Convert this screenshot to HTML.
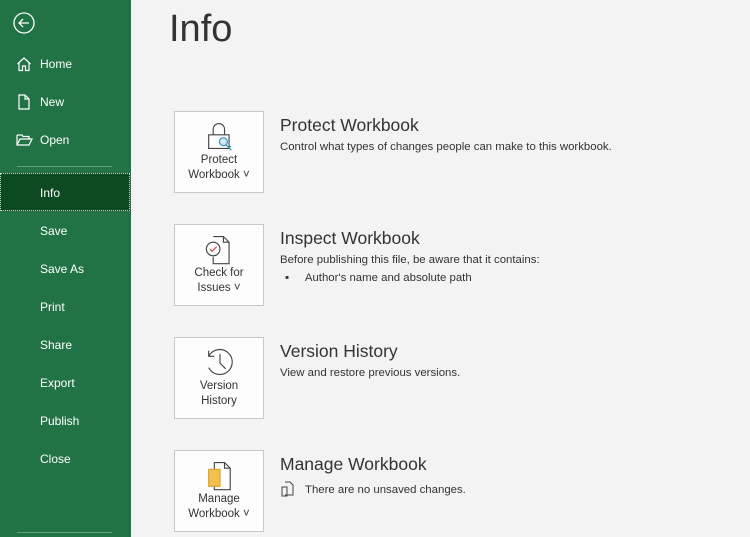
<!DOCTYPE html>
<html><head><style>
*{margin:0;padding:0;box-sizing:border-box}
body{width:750px;height:537px;overflow:hidden;background:#f3f3f3;font-family:"Liberation Sans",sans-serif;position:relative}
#side{position:absolute;left:0;top:0;width:131px;height:537px;background:#217346;color:#fff}
.it{position:absolute;left:40px;font-size:12px;color:#fff}
.ic{position:absolute;left:16px}
.sep{position:absolute;left:17px;width:95px;height:1px;background:#5fa07a}
#info{position:absolute;left:0;top:173px;width:130px;height:38px;background:#0d4a22;border:1px dotted #cfd8cf}
h1{position:absolute;left:169px;top:8px;font-size:38px;font-weight:normal;color:#333}
.box{position:absolute;left:174px;width:90px;height:82px;background:#fdfdfd;border:1px solid #c8c8c8;text-align:center;font-size:11.5px;color:#333;line-height:15px}
.box svg{position:absolute;left:28px;top:7px}
.box span{position:absolute;left:0;right:0;top:41px}
.t{position:absolute;left:280px;font-size:17.5px;color:#333}
.d{position:absolute;left:280px;font-size:11.4px;color:#333}
</style></head><body>
<div id="side">
<svg class="ic" style="left:12px;top:11px" width="24" height="24" viewBox="0 0 24 24" fill="none" stroke="#fff" stroke-width="1.3"><circle cx="12" cy="12" r="10"/><path d="M17 12H7M11 8l-4 4 4 4"/></svg>
<svg class="ic" style="top:56px" width="16" height="16" viewBox="0 0 16 16" fill="none" stroke="#fff" stroke-width="1.2"><path d="M1.5 8L8 2l6.5 6M3 7v7.5h3.5V10h3v4.5H13V7"/></svg>
<div class="it" style="top:57px">Home</div>
<svg class="ic" style="top:94px" width="16" height="16" viewBox="0 0 16 16" fill="none" stroke="#fff" stroke-width="1.2"><path d="M3 1h6l4 4v10H3zM9 1v4h4"/></svg>
<div class="it" style="top:95px">New</div>
<svg class="ic" style="top:132px" width="18" height="16" viewBox="0 0 18 16" fill="none" stroke="#fff" stroke-width="1.2"><path d="M1 3h5l1 1.5h6V7M1 3v10h12l3-6H4l-3 6"/></svg>
<div class="it" style="top:133px">Open</div>
<div class="sep" style="top:166px"></div>
<div id="info"></div>
<div class="it" style="top:186px">Info</div>
<div class="it" style="top:224px">Save</div>
<div class="it" style="top:262px">Save As</div>
<div class="it" style="top:300px">Print</div>
<div class="it" style="top:338px">Share</div>
<div class="it" style="top:376px">Export</div>
<div class="it" style="top:414px">Publish</div>
<div class="it" style="top:452px">Close</div>
<div class="sep" style="top:532px"></div>
</div>
<h1>Info</h1>

<div class="box" style="top:111px"><svg width="34" height="34" viewBox="0 0 30 30" fill="none" stroke="#444" stroke-width="1"><path d="M9 14V9a5 5 0 0 1 10 0v5M5 14h18v12H5z"/><circle cx="18" cy="20" r="3.5" stroke="#2a8fb5" fill="#cfe8f2"/><path d="M20 22.5l5 5M23 25.5l1.5-1.5" stroke="#2a8fb5"/></svg><span>Protect<br>Workbook ˅</span></div>
<div class="t" style="top:115px">Protect Workbook</div>
<div class="d" style="top:141px">Control what types of changes people can make to this workbook.</div>

<div class="box" style="top:224px"><svg width="34" height="34" viewBox="0 0 30 30" fill="none" stroke="#444" stroke-width="1"><path d="M9 4h9l5 5v19H9V22M18 4v5h5"/><circle cx="9" cy="15" r="6" fill="#fdfdfd"/><path d="M6 15l2 2 4-4" stroke="#c44"/></svg><span>Check for<br>Issues ˅</span></div>
<div class="t" style="top:228px">Inspect Workbook</div>
<div class="d" style="top:254px">Before publishing this file, be aware that it contains:</div>
<div class="d" style="top:272px;left:285px">▪&nbsp;&nbsp;&nbsp;&nbsp;&nbsp;Author's name and absolute path</div>

<div class="box" style="top:337px"><svg width="34" height="34" viewBox="0 0 30 30" fill="none" stroke="#444" stroke-width="1"><path d="M5 10a11 11 0 1 1 0 10M5 5v5h5M15 8v8l5 5"/></svg><span>Version<br>History</span></div>
<div class="t" style="top:341px">Version History</div>
<div class="d" style="top:367px">View and restore previous versions.</div>

<div class="box" style="top:450px"><svg width="34" height="34" viewBox="0 0 30 30" fill="none" stroke="#444" stroke-width="1"><path d="M10 4h9l5 5v19H10zM19 4v5h5"/><rect x="5" y="10" width="10" height="15" fill="#f2c04c" stroke="#d9a030"/></svg><span>Manage<br>Workbook ˅</span></div>
<div class="t" style="top:454px">Manage Workbook</div>
<svg style="position:absolute;left:281px;top:481px" width="14" height="16" viewBox="0 0 14 16" fill="none" stroke="#444" stroke-width="1"><path d="M4 1h5l3 3v10H4M1 6h5v9H1z"/></svg>
<div class="d" style="top:484px;left:305px">There are no unsaved changes.</div>
</body></html>
